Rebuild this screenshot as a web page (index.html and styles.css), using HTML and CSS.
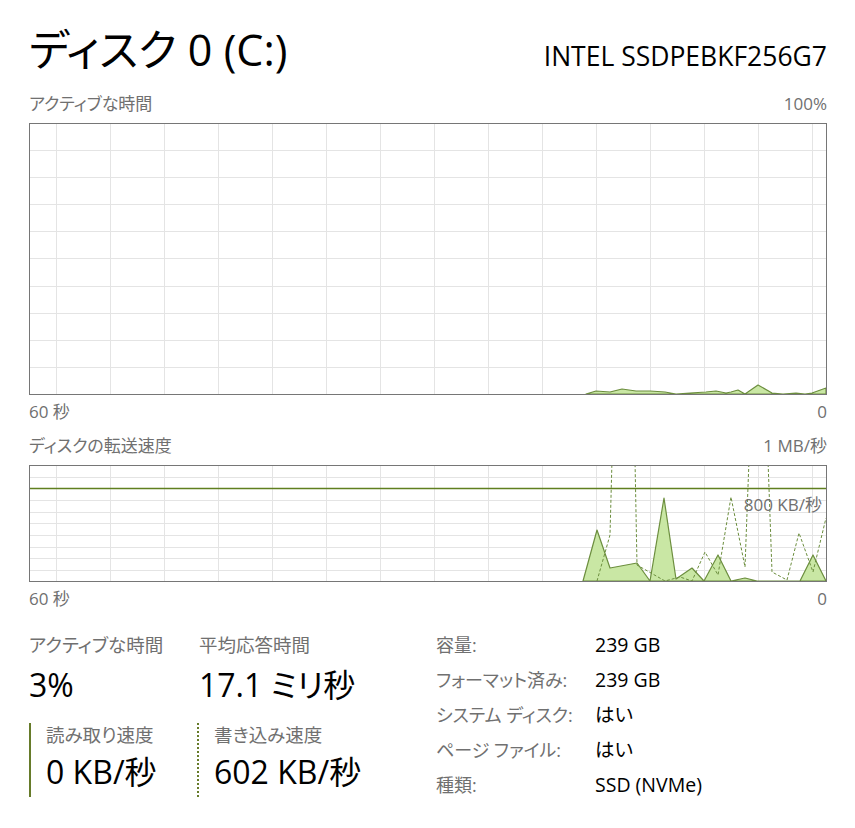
FILE: index.html
```html
<!DOCTYPE html>
<html lang="ja">
<head>
    <meta charset="UTF-8">
    <title>ディスク 0 (C:)</title>
    <link rel="stylesheet" href="styles.css">
</head>
<body>
    <div class="title-row">
        <h1>ディスク 0 (C:)</h1>
        <span class="model">INTEL SSDPEBKF256G7</span>
    </div>

    <div class="graph-head">
        <span>アクティブな時間</span>
        <span>100%</span>
    </div>
    <svg class="graph graph-active" width="798" height="272" viewBox="29 123 798 272">
        <g class="grid">
            <path d="M56.5 123V394 M110.5 123V394 M164.5 123V394 M218.5 123V394 M272.5 123V394 M326.5 123V394 M380.5 123V394 M434.5 123V394 M488.5 123V394 M542.5 123V394 M596.5 123V394 M650.5 123V394 M704.5 123V394 M758.5 123V394 M812.5 123V394"/>
            <path d="M29 150.5H826 M29 177.5H826 M29 204.5H826 M29 231.5H826 M29 258.5H826 M29 286.5H826 M29 313.5H826 M29 340.5H826 M29 367.5H826"/>
        </g>
        <polygon class="area" points="586,394 596,391 610,392 622,389 636,391 650,391 665,392 676,394 690,393 706,392 716,391 726,393 731,392 738,390 745,394 758,385 772,393 783,394 796,393 805,394 812,393 826,388 826,394"/>
        <rect class="frame" x="29.5" y="123.5" width="797" height="271"/>
    </svg>
    <div class="axis">
        <span>60 秒</span>
        <span>0</span>
    </div>

    <div class="graph-head">
        <span>ディスクの転送速度</span>
        <span>1 MB/秒</span>
    </div>
    <svg class="graph graph-transfer" width="798" height="117" viewBox="29 465 798 117">
        <g class="grid">
            <path d="M56.5 465V582 M110.5 465V582 M164.5 465V582 M218.5 465V582 M272.5 465V582 M326.5 465V582 M380.5 465V582 M434.5 465V582 M488.5 465V582 M542.5 465V582 M596.5 465V582 M650.5 465V582 M704.5 465V582 M758.5 465V582 M812.5 465V582"/>
            <path d="M29 477.5H826 M29 500.5H826 M29 512.5H826 M29 523.5H826 M29 535.5H826 M29 547.5H826 M29 558.5H826 M29 570.5H826"/>
        </g>
        <polygon class="area" points="583,581 597,530 610,568 637,563 650,581 664,498 676,579 692,568 704,581 718,555 731,581 745,578 757,581 800,581 813,555 826,581"/>
        <polyline class="write" points="597,581 610,535 612,460 635,460 637,565 665,581 680,577 692,581 705,552 718,575 731,497 745,567 749,460 768,460 772,572 787,580 799,533 813,572 826,518"/>
        <path class="limit" d="M29 488.5H826"/>
        <text class="limit-label" x="822" y="511" text-anchor="end">800 KB/秒</text>
        <rect class="frame" x="29.5" y="465.5" width="797" height="116"/>
    </svg>
    <div class="axis">
        <span>60 秒</span>
        <span>0</span>
    </div>

    <div class="stats">
        <div class="live">
            <div class="stat">
                <div class="stat-label">アクティブな時間</div>
                <div class="stat-value">3%</div>
            </div>
            <div class="stat avg">
                <div class="stat-label">平均応答時間</div>
                <div class="stat-value">17.1 ミリ秒</div>
            </div>
            <div class="stat rate read">
                <div class="stat-label">読み取り速度</div>
                <div class="stat-value">0 KB/秒</div>
            </div>
            <div class="stat rate write">
                <div class="stat-label">書き込み速度</div>
                <div class="stat-value">602 KB/秒</div>
            </div>
        </div>

        <dl class="props">
            <dt>容量:</dt><dd>239 GB</dd>
            <dt>フォーマット済み:</dt><dd>239 GB</dd>
            <dt>システム ディスク:</dt><dd>はい</dd>
            <dt>ページ ファイル:</dt><dd>はい</dd>
            <dt>種類:</dt><dd>SSD (NVMe)</dd>
        </dl>
    </div>
</body>
</html>
```

FILE: styles.css
```css
* {
    margin: 0;
    padding: 0;
    box-sizing: border-box;
}

body {
    background-color: #fff;
    color: #000;
    font-family: "Segoe UI", "Open Sans", "Noto Sans CJK JP", sans-serif;
    font-feature-settings: "palt";
    padding: 0 28px 0 29px;
    width: 855px;
}

.title-row {
    display: flex;
    justify-content: space-between;
    align-items: baseline;
    height: 90px;
    padding-top: 22px;
}

h1 {
    font-size: 43px;
    font-weight: 400;
    line-height: 56px;
}

.model {
    font-size: 26.5px;
}

.graph-head,
.axis {
    display: flex;
    justify-content: space-between;
    color: #707070;
    font-size: 17px;
    line-height: 22px;
}

.graph-head {
    height: 33px;
    padding-top: 3px;
}

.axis {
    height: 37px;
    padding-top: 6px;
}

.graph {
    display: block;
}

.grid path {
    stroke: #e4e4e4;
    stroke-width: 1;
    fill: none;
}

.frame {
    fill: none;
    stroke: #767676;
    stroke-width: 1;
}

.area {
    fill: #c9e7a4;
    stroke: #6c8e3e;
    stroke-width: 1.2;
    stroke-linejoin: round;
}

.write {
    fill: none;
    stroke: #6c8e3e;
    stroke-width: 1;
    stroke-dasharray: 3 2;
}

.limit {
    stroke: #5f7f1f;
    stroke-width: 1.4;
}

.limit-label {
    fill: #707070;
    font-size: 17px;
}

.stats {
    display: flex;
    padding-top: 14px;
}

.live {
    display: grid;
    grid-template-columns: 168px 230px;
    grid-template-rows: 80px 74px;
    row-gap: 10px;
    width: 407px;
}

.avg {
    padding-left: 2px;
}

.stat-label {
    color: #707070;
    font-size: 18.5px;
    line-height: 24px;
    height: 24px;
}

.stat-value {
    font-size: 32px;
    line-height: 40px;
    height: 40px;
    margin-top: 8px;
}

.rate {
    padding-left: 15px;
    border-left: 2px solid #667b2a;
}

.rate .stat-value {
    margin-top: 5px;
}

.rate.write {
    border-left: 2px dotted #667b2a;
}

.props {
    display: grid;
    grid-template-columns: 159px auto;
    grid-auto-rows: 35px;
    font-size: 18px;
    line-height: 24px;
}

.props dt {
    color: #707070;
}

.props dd {
    font-size: 19.5px;
}
```
